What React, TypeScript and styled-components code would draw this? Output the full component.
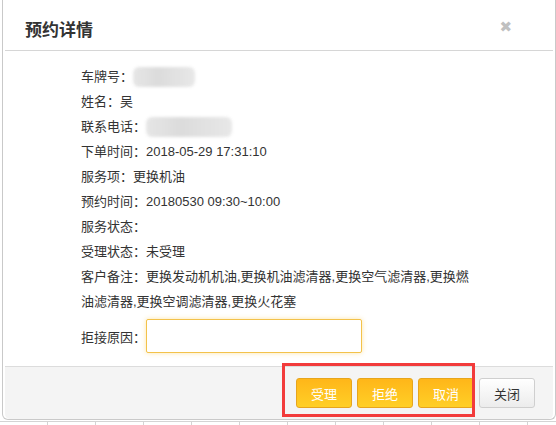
import styled, { createGlobalStyle } from "styled-components";

const GlobalStyle = createGlobalStyle`
  html, body {
    margin: 0;
    padding: 0;
    background: #fff;
  }
  body {
    font-family: "Liberation Sans", "Noto Sans CJK SC", sans-serif;
    font-size: 13px;
    color: #333;
    overflow: hidden;
  }
`;

const Page = styled.div`
  width: 556px;
  height: 425px;
  position: relative;
  overflow: hidden;
  background: #fff;
`;

const Dialog = styled.div`
  position: relative;
  margin-left: 2px;
  width: 554px;
  height: 420px;
  border: 1px solid #c9c9c9;
  border-top: none;
  border-radius: 0 0 6px 6px;
  background: #fff;
  box-sizing: border-box;
  padding: 0 2px 0 2px;
  display: flex;
  flex-direction: column;
`;

const Header = styled.div`
  height: 51px;
  border-bottom: 1px solid #d6d6d6;
  display: flex;
  align-items: center;
  justify-content: space-between;
  padding: 0 20px 0 20px;
  box-sizing: border-box;
`;

const Title = styled.h3`
  margin: 0;
  font-family: "Noto Sans CJK SC", sans-serif;
  font-size: 17px;
  font-weight: 700;
  color: #333;
  padding-top: 6px;
`;

const CloseX = styled.span`
  font-family: "DejaVu Sans", sans-serif;
  font-size: 15px;
  font-weight: 700;
  color: #c0c0c0;
  margin-right: 21px;
  padding-top: 4px;
`;

const Body = styled.div`
  flex: 1;
  padding: 13px 0 0 76px;
`;

const Row = styled.div`
  line-height: 25px;
  height: 25px;
  display: flex;
  align-items: center;
  white-space: nowrap;
`;

const NoteRow = styled.div`
  line-height: 25px;
  width: 395px;
  word-break: break-all;
`;

const Blur = styled.span<{ w: number }>`
  display: inline-block;
  width: ${(p) => p.w}px;
  height: 20px;
  background: linear-gradient(90deg, #e2e2e2, #d6d6d6 40%, #e4e4e4);
  border-radius: 6px;
  filter: blur(1.5px);
  opacity: 0.85;
`;

const ReasonRow = styled.div`
  display: flex;
  align-items: center;
  margin-top: 5px;
`;

const ReasonInput = styled.input`
  width: 216px;
  height: 34px;
  box-sizing: border-box;
  border: 1px solid #f3c24a;
  border-radius: 2px;
  box-shadow: 0 0 5px rgba(248, 196, 60, 0.45);
  outline: none;
  font: inherit;
  padding: 0 6px;
`;

const Footer = styled.div`
  height: 53px;
  border-top: 1px solid #dcdcdc;
  background: #f4f4f4;
  border-radius: 0 0 5px 5px;
  display: flex;
  align-items: center;
  justify-content: flex-end;
  gap: 5px;
  padding: 0 18px 0 0;
  box-sizing: border-box;
`;

const Button = styled.button<{ $primary?: boolean }>`
  width: 56px;
  height: 30px;
  box-sizing: border-box;
  border-radius: 3px;
  font-family: "Noto Sans CJK SC", sans-serif;
  font-size: 13px;
  cursor: pointer;
  padding: 0;
  border: 1px solid ${(p) => (p.$primary ? "#e7a51c" : "#cfcfcf")};
  color: ${(p) => (p.$primary ? "#fff" : "#333")};
  background: ${(p) =>
    p.$primary
      ? "linear-gradient(#ffb619, #ffcf26)"
      : "linear-gradient(#ffffff, #ececec)"};
`;

const Annotation = styled.div`
  position: absolute;
  left: 282px;
  top: 363px;
  width: 193px;
  height: 54px;
  border: 3px solid #f23b3b;
  box-sizing: border-box;
  pointer-events: none;
`;

const Backdrop = styled.div`
  height: 5px;
  border-top: 1px solid #d4d4d4;
  margin-top: 1px;
  background: repeating-linear-gradient(
    90deg,
    transparent 0 47px,
    #d4d4d4 47px 48px
  );
`;

const info: { label: string; value?: string; blur?: number }[] = [
  { label: "车牌号：", blur: 62 },
  { label: "姓名：", value: "吴" },
  { label: "联系电话：", blur: 86 },
  { label: "下单时间：", value: "2018-05-29 17:31:10" },
  { label: "服务项：", value: "更换机油" },
  { label: "预约时间：", value: "20180530 09:30~10:00" },
  { label: "服务状态：" },
  { label: "受理状态：", value: "未受理" },
];

export default function App() {
  return (
    <Page>
      <GlobalStyle />
      <Dialog>
        <Header>
          <Title>预约详情</Title>
          <CloseX>✖</CloseX>
        </Header>
        <Body>
          {info.map((r) => (
            <Row key={r.label}>
              <span>{r.label}</span>
              {r.blur ? <Blur w={r.blur} /> : r.value}
            </Row>
          ))}
          <NoteRow>
            客户备注：更换发动机机油,更换机油滤清器,更换空气滤清器,更换燃油滤清器,更换空调滤清器,更换火花塞
          </NoteRow>
          <ReasonRow>
            <span>拒接原因：</span>
            <ReasonInput />
          </ReasonRow>
        </Body>
        <Footer>
          <Button $primary>受理</Button>
          <Button $primary>拒绝</Button>
          <Button $primary>取消</Button>
          <Button>关闭</Button>
        </Footer>
      </Dialog>
      <Backdrop />
      <Annotation />
    </Page>
  );
}
